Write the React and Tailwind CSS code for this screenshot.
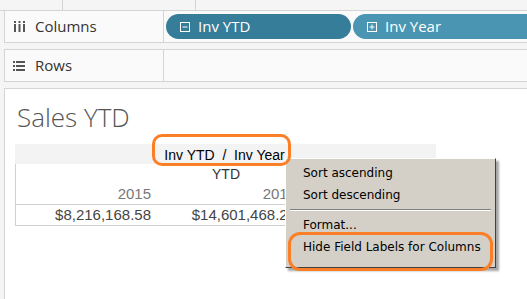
import { useState } from "react";

const ShelfIconColumns = () => (
  <svg width="11" height="11" viewBox="0 0 11 11" className="text-[#555]">
    <rect x="0" y="3" width="2" height="8" fill="currentColor" />
    <rect x="4.5" y="3" width="2" height="8" fill="currentColor" />
    <rect x="9" y="3" width="2" height="8" fill="currentColor" />
    <rect x="0" y="0" width="2" height="2" fill="currentColor" />
    <rect x="4.5" y="0" width="2" height="2" fill="currentColor" />
    <rect x="9" y="0" width="2" height="2" fill="currentColor" />
  </svg>
);

const ShelfIconRows = () => (
  <svg width="12" height="10" viewBox="0 0 12 10" className="text-[#555]">
    <rect x="0" y="0" width="2" height="2" fill="currentColor" />
    <rect x="3" y="0" width="9" height="2" fill="currentColor" />
    <rect x="0" y="4" width="2" height="2" fill="currentColor" />
    <rect x="3" y="4" width="9" height="2" fill="currentColor" />
    <rect x="0" y="8" width="2" height="2" fill="currentColor" />
    <rect x="3" y="8" width="9" height="2" fill="currentColor" />
  </svg>
);

const BoxIcon = ({ plus }) => (
  <svg width="10" height="10" viewBox="0 0 10 10">
    <rect x="0.5" y="0.5" width="9" height="9" fill="none" stroke="white" />
    <line x1="2.5" y1="5" x2="7.5" y2="5" stroke="white" />
    {plus && <line x1="5" y1="2.5" x2="5" y2="7.5" stroke="white" />}
  </svg>
);

const Pill = ({ label, plus, className }) => (
  <div className={`h-[25px] rounded-full flex items-center gap-2 pl-[14px] text-white text-[15px] ${className}`}>
    <BoxIcon plus={plus} />
    <span>{label}</span>
  </div>
);

export default function App() {
  const [menuItems] = useState(["Sort ascending", "Sort descending"]);

  return (
    <div className="relative w-[527px] h-[299px] overflow-hidden bg-[#f5f5f5] flex flex-col" style={{ fontFamily: "'Open Sans', 'Noto Sans', sans-serif" }}>
      {/* top strip */}
      <div className="h-[11px] flex border-b border-[#d4d4d4] shrink-0">
        <div className="w-[63px] border-r border-[#d4d4d4]" />
        <div className="w-[133px] border-r border-[#d4d4d4]" />
      </div>

      {/* Columns shelf */}
      <div className="ml-[4px] h-[32px] flex bg-[#fafafa] border-l border-b border-[#d4d4d4] shrink-0">
        <div className="w-[159px] border-r border-[#d4d4d4] flex items-center gap-[10px] pl-[9px] text-[15px] text-[#333]">
          <ShelfIconColumns />
          <span>Columns</span>
        </div>
        <div className="flex-1 flex items-center gap-[2px] pl-[2px]">
          <Pill label="Inv YTD" className="w-[185px] bg-[#357d99]" />
          <Pill label="Inv Year" plus className="flex-1 bg-[#4a96b2] rounded-r-none" />
        </div>
      </div>

      {/* Rows shelf */}
      <div className="ml-[4px] mt-[6px] h-[33px] flex bg-[#fafafa] border border-r-0 border-[#d4d4d4] shrink-0">
        <div className="w-[159px] border-r border-[#d4d4d4] flex items-center gap-[10px] pl-[8px] text-[15px] text-[#333]">
          <ShelfIconRows />
          <span>Rows</span>
        </div>
        <div className="flex-1" />
      </div>

      {/* sheet */}
      <div className="ml-[4px] mt-[6px] flex-1 bg-white border-t border-l border-[#d4d4d4] pl-[10px] pt-[10px]">
        <div className="pl-[2px] text-[26px] leading-[36px] text-[#555] font-light" style={{ fontFamily: "'Open Sans', sans-serif" }}>
          Sales YTD
        </div>

        <div className="mt-[9px] w-[421px]" style={{ fontFamily: "'Liberation Sans', Arial, sans-serif" }}>
          <div className="h-[20px] bg-[#f3f3f3] flex items-end justify-center text-[14px] leading-[17px] text-black">
            <span className="mr-[2px] whitespace-pre">Inv YTD  /  Inv Year</span>
          </div>
          <div className="w-[300px] border-l border-b border-[#d0d0d0]">
            <div className="h-[20px] flex items-center text-[14px] text-[#333]">
              <span className="ml-[196px]">YTD</span>
            </div>
            <div className="h-[21px] flex items-center text-[15px] text-[#777] border-b border-[#d0d0d0]">
              <span className="w-[135px] text-right">2015</span>
              <span className="w-[145px] text-right">2016</span>
            </div>
            <div className="h-[20px] flex items-center text-[15px] text-[#444]">
              <span className="w-[135px] text-right">$8,216,168.58</span>
              <span className="w-[145px] text-right">$14,601,468.21</span>
            </div>
          </div>
        </div>
      </div>

      {/* context menu */}
      <div
        className="absolute left-[285px] top-[158px] w-[211px] h-[110px] bg-[#d4d0c8] border border-t-white border-l-white border-r-[#404040] border-b-[#404040] shadow-[3px_3px_2px_rgba(0,0,0,0.35)] text-[12px] text-black pt-[3px] whitespace-nowrap"
        style={{ fontFamily: "Tahoma, 'DejaVu Sans', sans-serif" }}
      >
        {menuItems.map((m) => (
          <div key={m} className="h-[22px] flex items-center pl-[17px]">{m}</div>
        ))}
        <div className="mx-[4px] my-[3px] border-t border-[#808080] border-b border-b-white" />
        <div className="h-[22px] flex items-center pl-[17px]">Format...</div>
        <div className="h-[22px] flex items-center pl-[17px]">Hide Field Labels for Columns</div>
      </div>

      {/* highlights drawn over everything */}
      <div className="absolute left-[152px] top-[134px] w-[139px] h-[32px] rounded-[10px] border-[3px] border-[#fb7f27]" />
      <div className="absolute left-[288px] top-[232px] w-[205px] h-[39px] rounded-[12px] border-[3px] border-[#fb7f27]" />
    </div>
  );
}
